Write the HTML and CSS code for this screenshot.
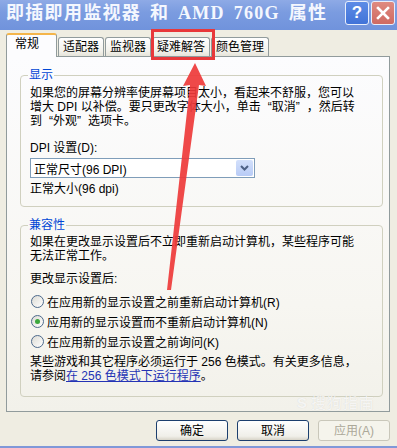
FILE: index.html
```html
<!DOCTYPE html>
<html lang="zh-CN">
<head>
  <meta charset="UTF-8">
  <meta name="viewport" content="width=device-width, initial-scale=1.0">
  <title>即插即用监视器 和 AMD 760G 属性</title>
  <link rel="stylesheet" href="styles.css">
</head>
<body>
  <div class="window">
    <div class="titlebar">
      <span class="title">即插即用监视器 和 AMD 760G 属性</span>
      <div class="tb-buttons">
        <span class="tb-btn help">?</span>
        <span class="tb-btn close">
          <svg width="14" height="14" viewBox="0 0 14 14"><path d="M2 2 L12 12 M12 2 L2 12" stroke="#fff" stroke-width="2.6" stroke-linecap="square"/></svg>
        </span>
      </div>
    </div>

    <div class="client">
      <div class="tabs">
        <span class="tab active">常规</span>
        <span class="tab">适配器</span>
        <span class="tab">监视器</span>
        <span class="tab">疑难解答</span>
        <span class="tab">颜色管理</span>
      </div>

      <div class="page">
        <fieldset class="group">
          <legend>显示</legend>
          <p class="note">如果您的屏幕分辨率使屏幕项目太小，看起来不舒服，您可以<br>增大 DPI 以补偿。要只更改字体大小，单击<span class="q-open">“</span>取消<span class="q-close">”</span>，然后转<br>到<span class="q-open">“</span>外观<span class="q-close">”</span>选项卡。</p>
          <p class="field-label">DPI 设置(D):</p>
          <div class="combo">
            <span class="combo-value">正常尺寸(96 DPI)</span>
            <span class="combo-arrow">
              <svg width="9" height="6" viewBox="0 0 9 6"><path d="M1 1 L4.5 4.5 L8 1" fill="none" stroke="#4d6185" stroke-width="2"/></svg>
            </span>
          </div>
          <p class="field-value">正常大小(96 dpi)</p>
        </fieldset>

        <fieldset class="group compat">
          <legend>兼容性</legend>
          <p class="note">如果在更改显示设置后不立即重新启动计算机，某些程序可能<br>无法正常工作。</p>
          <p class="field-label after">更改显示设置后:</p>
          <div class="radios">
            <div class="radio-row"><span class="radio"></span>在应用新的显示设置之前重新启动计算机(R)</div>
            <div class="radio-row"><span class="radio checked"></span>应用新的显示设置而不重新启动计算机(N)</div>
            <div class="radio-row"><span class="radio"></span>在应用新的显示设置之前询问(K)</div>
          </div>
          <p class="note last">某些游戏和其它程序必须运行于 256 色模式。有关更多信息，<br>请参阅<a class="link" href="#">在 256 色模式下运行程序</a>。</p>
        </fieldset>
      </div>

      <div class="actions">
        <button class="btn">确定</button>
        <button class="btn">取消</button>
        <button class="btn" disabled>应用(A)</button>
      </div>
    </div>

    <div class="watermark"><span class="wm-s">S</span>搜狗指南</div>

    <svg class="annot" width="397" height="448" viewBox="0 0 397 448">
      <rect x="152.5" y="30.5" width="61" height="28" fill="none" stroke="#e8383a" stroke-width="3"/>
      <polygon points="195,63 206,86 199,85 171,290 167,290 190,85 183,86" fill="#ee3a3a" opacity="0.92"/>
    </svg>
  </div>
</body>
</html>
```

FILE: styles.css
```css
body {
  margin: 0;
  font-family: "Liberation Sans", "Noto Sans CJK SC", sans-serif;
  font-size: 12px;
  color: #000;
}
p {
  margin: 0;
}

.window {
  position: relative;
  width: 397px;
  height: 448px;
  box-sizing: border-box;
  background-color: #efede2;
  border-bottom: 2px solid #8098d8;
  overflow: hidden;
}

/* title bar */
.titlebar {
  display: flex;
  align-items: flex-start;
  height: 30px;
  padding: 0 2px 0 6px;
  background: linear-gradient(#8eaae6, #7b9ce0 40%, #7093dc);
}
.title {
  flex: 1;
  font-family: "Liberation Serif", "Noto Sans CJK SC", serif;
  font-weight: bold;
  font-size: 18px;
  letter-spacing: 1.3px;
  word-spacing: 3px;
  line-height: 27px;
  color: #f4f7fe;
  white-space: nowrap;
}
.tb-buttons {
  display: flex;
  gap: 2px;
  margin-top: 1px;
}
.tb-btn {
  display: flex;
  align-items: center;
  justify-content: center;
  width: 24px;
  height: 24px;
  box-sizing: border-box;
  border: 1px solid #e8eefb;
  border-radius: 3px;
  color: #fff;
  font-family: "Liberation Sans", sans-serif;
  font-weight: bold;
  font-size: 17px;
}
.help {
  background: linear-gradient(#5d8ce6, #4173d8);
}
.close {
  background: linear-gradient(#df8a80, #cf6a62);
}

/* client area */
.client {
  padding: 3px 7px 0 6px;
}
.tabs {
  display: flex;
  align-items: flex-end;
  gap: 1px;
  height: 23px;
}
.tab {
  height: 19px;
  box-sizing: border-box;
  padding: 0 4px;
  line-height: 18px;
  border: 1px solid #919b9c;
  border-bottom: none;
  border-radius: 3px 3px 0 0;
  background: linear-gradient(#ffffff, #f3f2ec 70%, #e6e4da);
  white-space: nowrap;
}
.tab.active {
  position: relative;
  z-index: 1;
  height: 24px;
  margin-bottom: -1px;
  padding: 0 17px 0 8px;
  border-top: 2px solid #f4b54a;
  background: #fcfcfe;
}

.page {
  height: 356px;
  box-sizing: border-box;
  padding: 11px 6px 0 13px;
  border: 1px solid #919b9c;
  background: linear-gradient(#fcfcfe, #f7f6f1 70%, #f2f1ea);
}

.group {
  margin: 0;
  padding: 0 9px 10px 9px;
  min-width: 0;
  border: 1px solid #d0d0bf;
  border-radius: 4px;
}
.group legend {
  padding: 0 1px;
  margin-left: -2px;
  line-height: 14px;
  color: #0046d5;
}
.group.compat {
  margin-top: 11px;
  padding-bottom: 13px;
}
.note {
  margin-top: 4px;
  line-height: 14px;
  white-space: nowrap;
}
/* full-width quote marks, as the dialog font draws them */
.q-open {
  padding-left: 7px;
}
.q-close {
  padding-right: 7px;
}
.compat .note {
  margin-top: 3px;
}
.compat .note.last {
  margin-top: 4px;
}
.field-label {
  margin-top: 13px;
  line-height: 14px;
}
.field-label.after {
  margin-top: 9px;
}
.field-value {
  margin-top: 4px;
  line-height: 14px;
}

.combo {
  display: flex;
  align-items: center;
  justify-content: space-between;
  width: 225px;
  height: 20px;
  box-sizing: border-box;
  margin-top: 3px;
  padding: 0 1px 0 3px;
  border: 1px solid #7f9db9;
  background-color: #fff;
}
.combo-arrow {
  display: flex;
  align-items: center;
  justify-content: center;
  width: 17px;
  height: 16px;
  border-radius: 2px;
  background: linear-gradient(#d3e0fb, #b8cbf6);
}

.radios {
  margin-top: 5px;
}
.radio-row {
  display: flex;
  align-items: center;
  gap: 3px;
  height: 20px;
  white-space: nowrap;
}
.radio {
  position: relative;
  width: 13px;
  height: 13px;
  box-sizing: border-box;
  margin-left: 1px;
  border: 1px solid #4d6a8c;
  border-radius: 50%;
  background: linear-gradient(135deg, #dcdbd4, #ffffff);
}
.radio.checked::after {
  content: "";
  position: absolute;
  left: 3px;
  top: 3px;
  width: 5px;
  height: 5px;
  border-radius: 50%;
  background: #3ca83c;
}

.link {
  color: #2433b5;
  text-decoration: underline;
}

.actions {
  display: flex;
  justify-content: flex-end;
  gap: 9px;
  margin-top: 8px;
}
.btn {
  width: 72px;
  height: 21px;
  padding: 0;
  border: 1px solid #1c3f6e;
  border-radius: 3px;
  background: linear-gradient(#ffffff, #f0efe9 80%, #d8d4c8);
  font-family: "Liberation Sans", "Noto Sans CJK SC", sans-serif;
  font-size: 12px;
  line-height: 18px;
  color: #000;
}
.btn:disabled {
  border-color: #c9c7ba;
  background: #f5f4ec;
  color: #aca899;
}

/* overlays: screenshot watermark and annotation */
.watermark {
  position: absolute;
  left: 297px;
  top: 391px;
  font-size: 15px;
  color: rgba(255, 255, 255, 0.75);
  text-shadow: 0 0 1px rgba(0, 0, 0, 0.12);
  letter-spacing: 1px;
}
.wm-s {
  display: inline-block;
  margin-right: 3px;
  font-weight: bold;
}
.annot {
  position: absolute;
  left: 0;
  top: 0;
  pointer-events: none;
}
```
